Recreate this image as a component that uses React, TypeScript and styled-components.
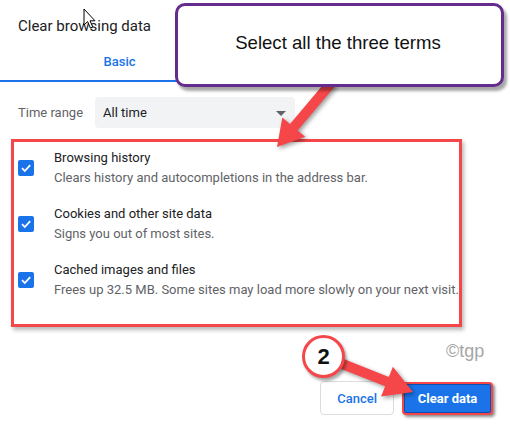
import React from 'react';
import styled, { createGlobalStyle } from 'styled-components';

const GlobalStyle = createGlobalStyle`
  html, body { margin: 0; padding: 0; background: #ffffff; }
  * { box-sizing: border-box; }
`;

const Dialog = styled.div`
  position: relative;
  width: 510px; height: 431px; overflow: hidden;
  background: #ffffff;
  font-family: Roboto, "Liberation Sans", sans-serif;
  color: #202124;
`;

const Title = styled.h2`
  margin: 0; padding: 15px 18px 0;
  font-size: 15px; line-height: 22px; font-weight: 400;
  color: #202124;
`;

const TabBar = styled.div`
  display: flex; width: 478px;
`;

const Tab = styled.div<{ $active?: boolean }>`
  flex: 1; text-align: center;
  padding: 17px 0 10px;
  font-size: 13px; line-height: 16px; font-weight: 500;
  color: ${p => (p.$active ? '#1a73e8' : '#5f6368')};
  border-bottom: 2px solid ${p => (p.$active ? '#1a73e8' : 'transparent')};
`;

const RangeRow = styled.div`
  display: flex; align-items: center; gap: 12px;
  margin-top: 15px; padding: 0 18px;
  > span { font-size: 13px; color: #5f6368; }
`;

const Select = styled.div`
  position: relative;
  width: 200px; height: 31px; border-radius: 4px;
  background: #f1f3f4;
  display: flex; align-items: center; padding: 0 8px;
  font-size: 13px; color: #202124;
  &::after{
    content: ''; position: absolute; right: 9px; top: 14px;
    border-left: 5px solid transparent; border-right: 5px solid transparent;
    border-top: 5px solid #5f6368;
  }
`;

const Highlight = styled.div`
  margin: 11px 0 0 11px; width: 451px;
  border: 3px solid #f5474a;
  box-shadow: 2px 3px 4px rgba(0,0,0,0.28);
  padding: 6px 0 24px 4px;
  display: flex; flex-direction: column; gap: 16px;
`;

const Option = styled.label`
  display: flex; align-items: center; gap: 20px;
`;

const Box = styled.span`
  width: 16px; height: 16px; border-radius: 2px;
  background: #1a73e8; flex: none;
  display: flex; align-items: center; justify-content: center;
`;

const OptionText = styled.div`
  display: flex; flex-direction: column;
  font-size: 13px; line-height: 20px;
  > span:first-child { color: #202124; }
  > span:last-child { color: #5f6368; }
`;

const Footer = styled.div`
  display: flex; justify-content: flex-end; align-items: center; gap: 8px;
  margin-top: 54px; padding-right: 17px;
`;

const Button = styled.button<{ $primary?: boolean }>`
  height: ${p => (p.$primary ? 33 : 34)}px; border-radius: 4px;
  padding: 0 ${p => (p.$primary ? 0 : 16)}px;
  white-space: nowrap;
  font-family: Roboto, "Liberation Sans", sans-serif;
  font-size: 13px; font-weight: ${p => (p.$primary ? 700 : 500)};
  background: ${p => (p.$primary ? '#1a73e8' : '#ffffff')};
  color: ${p => (p.$primary ? '#ffffff' : '#1a73e8')};
  border: ${p => (p.$primary ? '2px solid #f5474a' : '1px solid #dadce0')};
  box-shadow: ${p => (p.$primary ? 'inset 0 0 0 1px #0b4fb0, 2px 2px 3px rgba(0,0,0,0.45)' : 'none')};
  width: ${p => (p.$primary ? '91px' : 'auto')};
`;

const Watermark = styled.span`
  position: absolute; left: 446px; top: 341px;
  font-family: "Liberation Sans", Arial, sans-serif;
  font-size: 18px; color: #a6a6a6;
`;

const Callout = styled.div`
  position: absolute; left: 175px; top: 3px; z-index: 3;
  width: 329px; height: 84px;
  background: #ffffff; border: 3px solid #652c8f; border-radius: 10px;
  box-shadow: 3px 4px 3px rgba(0,0,0,0.35);
  display: flex; align-items: center; justify-content: center;
  font-family: "Liberation Sans", Arial, sans-serif;
  font-size: 18.6px; color: #111111;
  padding: 0 3px 4px 0;
`;

const Badge = styled.div`
  position: absolute; left: 302px; top: 335px; z-index: 5;
  width: 43px; height: 43px; border-radius: 50%;
  background: #ffffff; border: 3px solid #f5474a;
  box-shadow: 2px 3px 3px rgba(0,0,0,0.35);
  display: flex; align-items: center; justify-content: center;
  font-family: "Liberation Sans", Arial, sans-serif;
  font-size: 22px; font-weight: 700; color: #111111;
`;

const Overlay = styled.svg<{ $z: number }>`
  position: absolute; left: 0; top: 0; z-index: ${p => p.$z};
  pointer-events: none;
  filter: drop-shadow(2px 2px 2px rgba(0,0,0,0.38));
`;

const Cursor = styled.svg`
  position: absolute; left: 83px; top: 8px; z-index: 6;
`;

function arrow(x1: number, y1: number, x2: number, y2: number, s: number, hw: number, hl: number) {
  const len = Math.hypot(x2 - x1, y2 - y1);
  const ux = (x2 - x1) / len, uy = (y2 - y1) / len;
  const nx = -uy, ny = ux;
  const bx = x2 - ux * hl, by = y2 - uy * hl;
  const p = (x: number, y: number, k: number) => `${x + nx * k},${y + ny * k}`;
  return [p(x1, y1, s / 2), p(bx, by, s / 2), p(bx, by, hw / 2), `${x2},${y2}`,
    p(bx, by, -hw / 2), p(bx, by, -s / 2), p(x1, y1, -s / 2)].join(' ');
}

const Check = () => (
  <svg width="12" height="12" viewBox="0 0 12 12">
    <path d="M2 6.2 L4.8 9 L10.2 3.2" fill="none" stroke="#fff" strokeWidth="1.8" />
  </svg>
);

const options = [
  ['Browsing history', 'Clears history and autocompletions in the address bar.'],
  ['Cookies and other site data', 'Signs you out of most sites.'],
  ['Cached images and files', 'Frees up 32.5 MB. Some sites may load more slowly on your next visit.'],
];

const App = () => {
  return (
    <Dialog>
      <GlobalStyle />
      <Title>Clear browsing data</Title>
      <TabBar>
        <Tab $active>Basic</Tab>
        <Tab>Advanced</Tab>
      </TabBar>
      <RangeRow>
        <span>Time range</span>
        <Select>All time</Select>
      </RangeRow>
      <Highlight>
        {options.map(([t, d]) => (
          <Option key={t}>
            <Box><Check /></Box>
            <OptionText>
              <span>{t}</span>
              <span>{d}</span>
            </OptionText>
          </Option>
        ))}
      </Highlight>
      <Footer>
        <Button>Cancel</Button>
        <Button $primary>Clear data</Button>
      </Footer>
      <Watermark>©tgp</Watermark>

      <Overlay $z={2} width="510" height="431">
        <polygon points={arrow(332, 82, 277, 147, 10, 30, 26)} fill="#f5474a" />
      </Overlay>
      <Callout>Select all the three terms</Callout>
      <Overlay $z={4} width="510" height="431">
        <polygon points={arrow(335, 361, 413, 392, 10, 32, 28)} fill="#f5474a" />
      </Overlay>
      <Badge>2</Badge>
      <Cursor width="14" height="22" viewBox="0 0 14 22">
        <path d="M1 1 L1 17 L4.6 13.6 L7.4 20 L9.8 19 L7 12.8 L12 12.8 Z" fill="#fff" stroke="#000" strokeWidth="1" />
      </Cursor>
    </Dialog>
  );
};

export default App;
